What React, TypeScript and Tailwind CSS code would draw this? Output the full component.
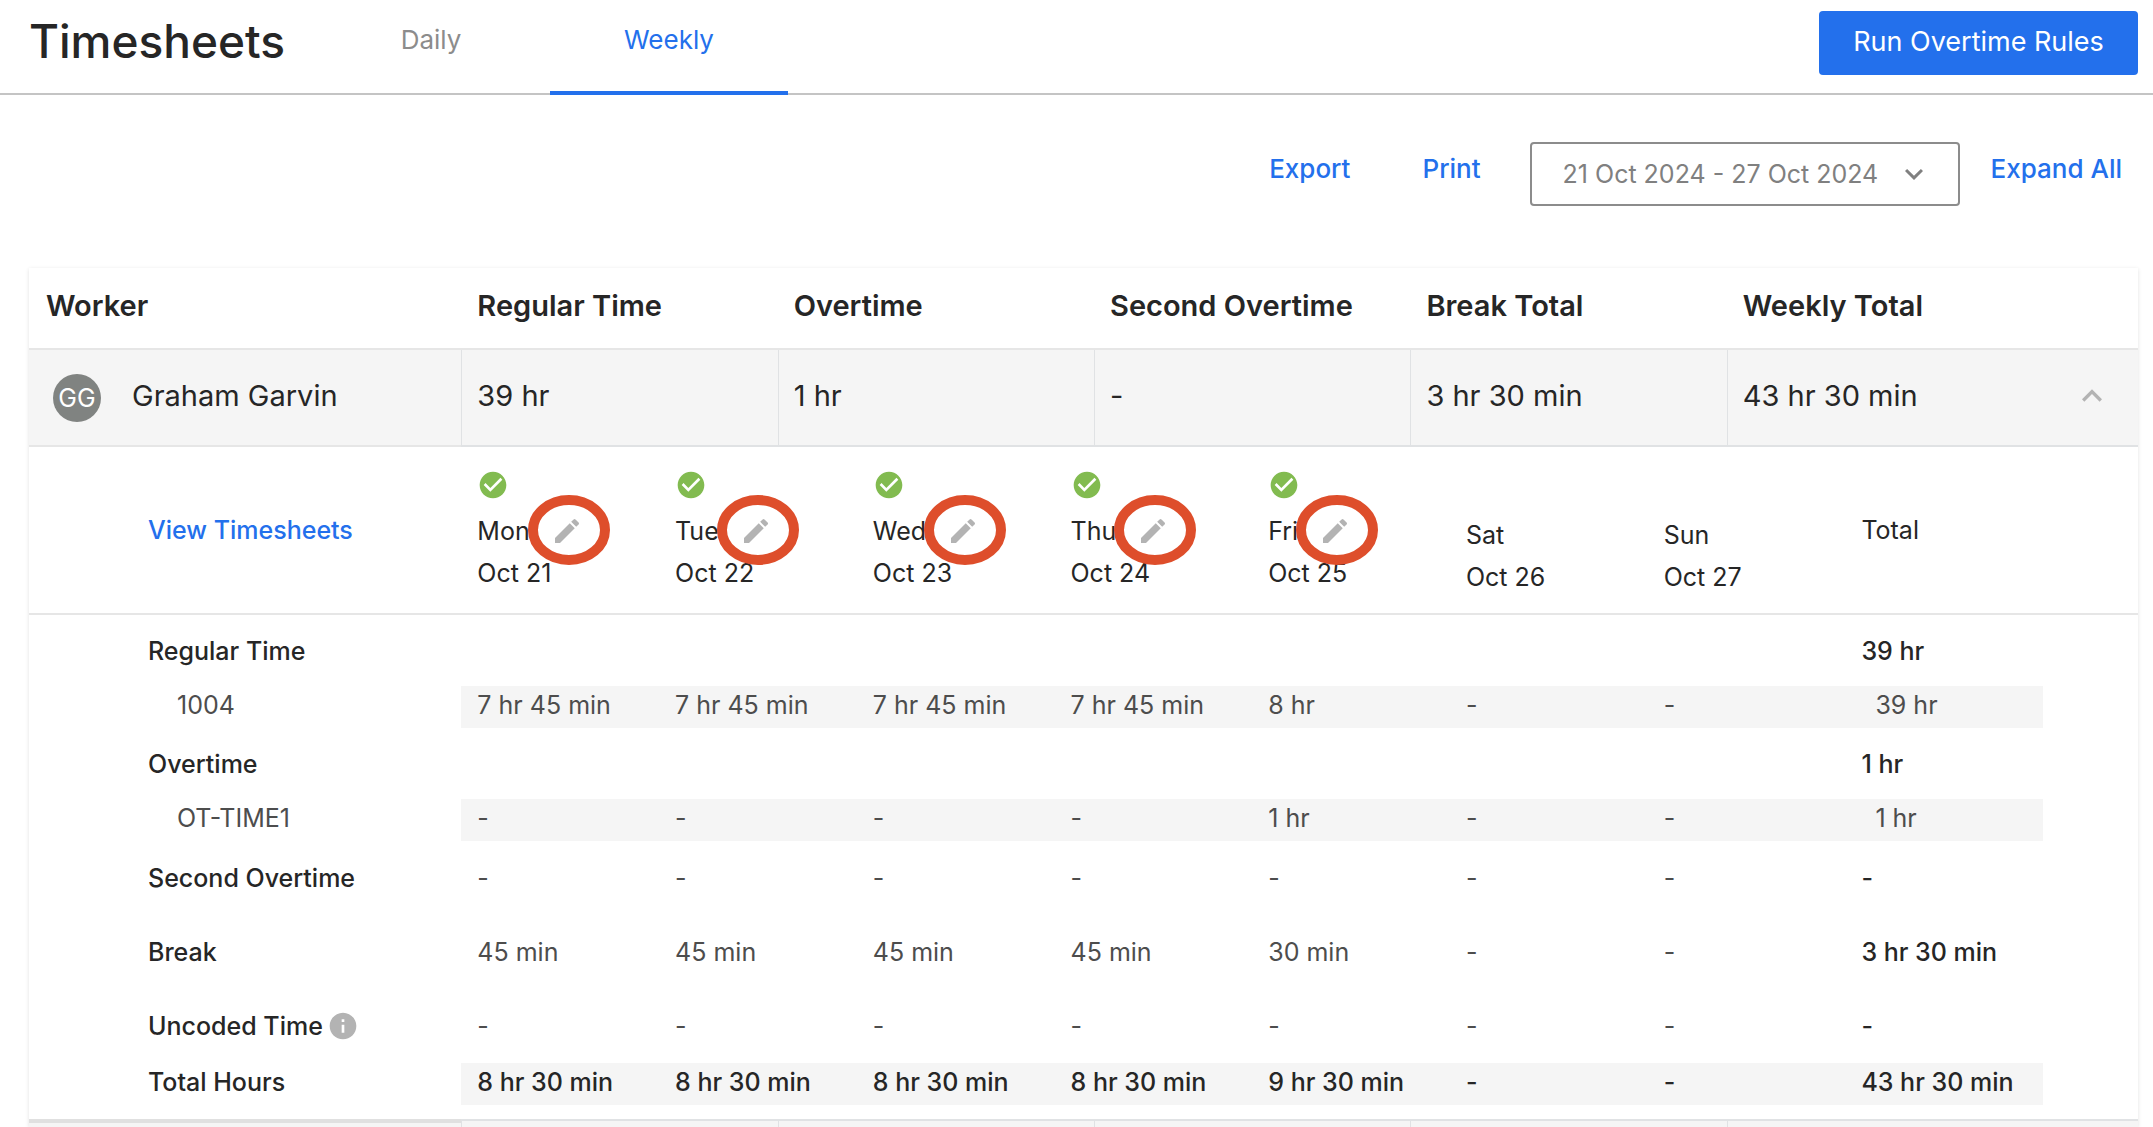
import React, { useState } from 'react';
import { MdCheckCircle, MdExpandLess, MdExpandMore, MdInfo } from 'react-icons/md';

type Day = {
    name: string;
    date: string;
    approved: boolean;
};

type Row = {
    label: string;
    code?: boolean;
    striped?: boolean;
    strong?: boolean;
    info?: boolean;
    height: string;
    values: string[];
    total: string;
};

const days: Day[] = [
    { name: 'Mon', date: 'Oct 21', approved: true },
    { name: 'Tue', date: 'Oct 22', approved: true },
    { name: 'Wed', date: 'Oct 23', approved: true },
    { name: 'Thu', date: 'Oct 24', approved: true },
    { name: 'Fri', date: 'Oct 25', approved: true },
    { name: 'Sat', date: 'Oct 26', approved: false },
    { name: 'Sun', date: 'Oct 27', approved: false },
];

const none = ['-', '-', '-', '-', '-', '-', '-'];
const blank = ['', '', '', '', '', '', ''];

const rows: Row[] = [
    { label: 'Regular Time', height: 'h-[71px]', values: blank, total: '39 hr' },
    {
        label: '1004',
        code: true,
        striped: true,
        height: 'h-[42px]',
        values: ['7 hr 45 min', '7 hr 45 min', '7 hr 45 min', '7 hr 45 min', '8 hr', '-', '-'],
        total: '39 hr',
    },
    { label: 'Overtime', height: 'h-[71px]', values: blank, total: '1 hr' },
    {
        label: 'OT-TIME1',
        code: true,
        striped: true,
        height: 'h-[42px]',
        values: ['-', '-', '-', '-', '1 hr', '-', '-'],
        total: '1 hr',
    },
    { label: 'Second Overtime', height: 'h-[74px]', values: none, total: '-' },
    {
        label: 'Break',
        height: 'h-[74px]',
        values: ['45 min', '45 min', '45 min', '45 min', '30 min', '-', '-'],
        total: '3 hr 30 min',
    },
    { label: 'Uncoded Time', info: true, height: 'h-[74px]', values: none, total: '-' },
    {
        label: 'Total Hours',
        striped: true,
        strong: true,
        height: 'h-[42px]',
        values: ['8 hr 30 min', '8 hr 30 min', '8 hr 30 min', '8 hr 30 min', '9 hr 30 min', '-', '-'],
        total: '43 hr 30 min',
    },
];

const summaryHeadings = ['Regular Time', 'Overtime', 'Second Overtime', 'Break Total'];
const summaryValues = ['39 hr', '1 hr', '-', '3 hr 30 min'];

function Header() {
    return (
        <header className="flex h-[95px] items-start border-b-2 border-[#c4c4c4] pl-[29px] pr-[15px]">
            <h1 className="w-[283px] pt-[17px] text-[46px] leading-[48px] font-medium text-[#262626]">Timesheets</h1>
            <nav className="flex text-[26px] leading-[32px]">
                <a href="#daily" className="h-[95px] w-[238px] pt-[24px] text-center text-[#8c8c8c]">
                    Daily
                </a>
                <a
                    href="#weekly"
                    aria-current="page"
                    className="h-[95px] w-[238px] border-b-4 border-[#2370ec] pt-[24px] text-center text-[#2370ec]"
                >
                    Weekly
                </a>
            </nav>
            <button
                type="button"
                className="ml-auto mt-[11px] h-[64px] w-[319px] rounded bg-[#2370ec] pb-[2px] text-[27px] text-white"
            >
                Run Overtime Rules
            </button>
        </header>
    );
}

function Toolbar() {
    return (
        <div className="flex items-start justify-end pt-[47px] pr-[31px] text-[26px] leading-[32px] font-medium text-[#2370ec]">
            <button type="button" className="mt-[11px] mr-[72px]">
                Export
            </button>
            <button type="button" className="mt-[11px] mr-[49px]">
                Print
            </button>
            <div className="relative mr-[31px] font-normal text-[#808080]">
                <select
                    aria-label="Pay period"
                    className="h-[64px] w-[430px] appearance-none rounded-sm border-2 border-[#8c8c8c] bg-white pl-[31px] text-[25px]"
                >
                    <option>21 Oct 2024 - 27 Oct 2024</option>
                </select>
                <MdExpandMore className="pointer-events-none absolute top-[14px] right-[28px] size-[36px]" />
            </div>
            <button type="button" className="mt-[11px]">
                Expand All
            </button>
        </div>
    );
}

function EditButton({ day }: { day: string }) {
    return (
        <button type="button" aria-label={`Edit ${day}`} className="relative ml-[21px] size-[32px]">
            <svg viewBox="0 0 24 24" fill="currentColor" className="size-[32px] text-[#b3b3b3]">
                <path d="M3 17.25V21h3.75L17.81 9.94l-3.75-3.75L3 17.25z" />
                <path d="M20.71 7.04a1 1 0 0 0 0-1.41l-2.34-2.34a1 1 0 0 0-1.41 0l-1.83 1.83 3.75 3.75 1.83-1.83z" />
            </svg>
            <svg
                viewBox="0 0 82 70"
                className="pointer-events-none absolute -top-[20px] -left-[23px] h-[70px] w-[82px] max-w-none"
            >
                <ellipse cx="41" cy="35" rx="36" ry="30" fill="none" stroke="#de4e2b" strokeWidth="10" />
            </svg>
        </button>
    );
}

function SummaryTable({ open, onToggle }: { open: boolean; onToggle: () => void }) {
    return (
        <table className="w-full table-fixed border-separate border-spacing-0 text-left text-[29px] leading-[36px]">
            <colgroup>
                <col className="w-[20.5%]" />
                <col className="w-[15%]" />
                <col className="w-[15%]" />
                <col className="w-[15%]" />
                <col className="w-[15%]" />
                <col className="w-[19.5%]" />
            </colgroup>
            <thead>
                <tr className="h-[82px]">
                    <th className="border-b-2 border-[#e6e6e6] pb-[4px] pl-[17px] font-semibold">Worker</th>
                    {summaryHeadings.map((heading) => (
                        <th key={heading} className="border-b-2 border-[#e6e6e6] pb-[4px] pl-[16px] font-semibold">
                            {heading}
                        </th>
                    ))}
                    <th className="border-b-2 border-[#e6e6e6] pb-[4px] pl-[16px] font-semibold">Weekly Total</th>
                </tr>
            </thead>
            <tbody>
                <tr className="h-[97px] bg-[#f5f5f5]">
                    <td className="border-b-2 border-[#e6e6e6] pl-[24px]">
                        <div className="flex items-center">
                            <span className="mr-[31px] flex size-[48px] items-center justify-center rounded-full bg-[#808381] text-[25px] text-white">
                                GG
                            </span>
                            <span className="pb-[3px]">Graham Garvin</span>
                        </div>
                    </td>
                    {summaryValues.map((value, i) => (
                        <td key={i} className="border-b-2 border-l border-[#e0e2e4] pb-[3px] pl-[15px]">
                            {value}
                        </td>
                    ))}
                    <td className="border-b-2 border-l border-[#e0e2e4] pb-[3px] pl-[15px]">
                        <div className="flex items-center justify-between pr-[26px]">
                            43 hr 30 min
                            <button type="button" aria-label="Toggle details" aria-expanded={open} onClick={onToggle}>
                                <MdExpandLess className="size-[40px] text-[#b3b3b3]" />
                            </button>
                        </div>
                    </td>
                </tr>
            </tbody>
        </table>
    );
}

function DetailTable() {
    return (
        <table className="w-full table-fixed border-separate border-spacing-0 text-left text-[25px] leading-[32px]">
            <colgroup>
                <col className="w-[20.5%]" />
                {days.map((day) => (
                    <col key={day.name} className="w-[9.375%]" />
                ))}
                <col className="w-[9.375%]" />
                <col className="w-[4.5%]" />
            </colgroup>
            <thead>
                <tr className="h-[168px] font-normal">
                    <td className="border-b-2 border-[#e6e6e6] pl-[119px] font-medium text-[#2370ec]">
                        <a href="#timesheets">View Timesheets</a>
                    </td>
                    {days.map((day) => (
                        <th
                            key={day.name}
                            className="border-b-2 border-[#e6e6e6] pl-[16px] align-top font-normal leading-[42px]"
                        >
                            {day.approved ? (
                                <MdCheckCircle className="mt-[22px] mb-[9px] size-[32px] text-[#82bb50]" />
                            ) : (
                                <div className="h-[67px]" />
                            )}
                            <div className="flex h-[42px] items-center">
                                {day.name}
                                {day.approved && <EditButton day={day.name} />}
                            </div>
                            {day.date}
                        </th>
                    ))}
                    <th className="border-b-2 border-[#e6e6e6] pl-[16px] font-normal">Total</th>
                    <td className="border-b-2 border-[#e6e6e6]" />
                </tr>
            </thead>
            <tbody>
                {rows.map((row) => (
                    <tr key={row.label} className={row.height}>
                        {row.code ? (
                            <th className="pb-[4px] pl-[148px] font-normal text-[#4d4d4d]">{row.label}</th>
                        ) : (
                            <th className={`pl-[119px] font-medium ${row.striped ? 'pb-[4px]' : ''}`}>
                                <div className="flex items-center">
                                    {row.label}
                                    {row.info && <MdInfo className="ml-[4px] size-[32px] text-[#b3b3b3]" />}
                                </div>
                            </th>
                        )}
                        {row.values.map((value, i) => (
                            <td
                                key={i}
                                className={`pl-[16px] ${row.striped ? 'bg-[#f5f5f5] pb-[4px]' : ''} ${row.strong ? 'font-medium' : 'text-[#4d4d4d]'}`}
                            >
                                {value}
                            </td>
                        ))}
                        <td
                            className={`whitespace-nowrap ${row.striped ? 'bg-[#f5f5f5] pb-[4px]' : ''} ${row.code ? 'pl-[30px] text-[#4d4d4d]' : 'pl-[16px] font-medium'}`}
                        >
                            {row.total}
                        </td>
                        <td />
                    </tr>
                ))}
            </tbody>
        </table>
    );
}

export default function App() {
    const [open, setOpen] = useState(true);

    return (
        <div className="bg-white font-['Inter',sans-serif] text-[#262626]">
            <Header />
            <Toolbar />
            <main className="mt-[62px] mr-[15px] ml-[29px] shadow-[0_1px_4px_rgba(0,0,0,0.12)]">
                <SummaryTable open={open} onToggle={() => setOpen(!open)} />
                {open && <DetailTable />}
                {/* top edge of the next worker row */}
                <div className="mt-[14px] flex h-[8px] bg-[#f5f5f5]">
                    <div className="w-[20.5%] border-t-4 border-[#e0e0e0]" />
                    <div className="w-[15%] border-t-2 border-l border-[#e0e2e4]" />
                    <div className="w-[15%] border-t-2 border-l border-[#e0e2e4]" />
                    <div className="w-[15%] border-t-2 border-l border-[#e0e2e4]" />
                    <div className="w-[15%] border-t-2 border-l border-[#e0e2e4]" />
                    <div className="w-[19.5%] border-t-2 border-l border-[#e0e2e4]" />
                </div>
            </main>
        </div>
    );
}
